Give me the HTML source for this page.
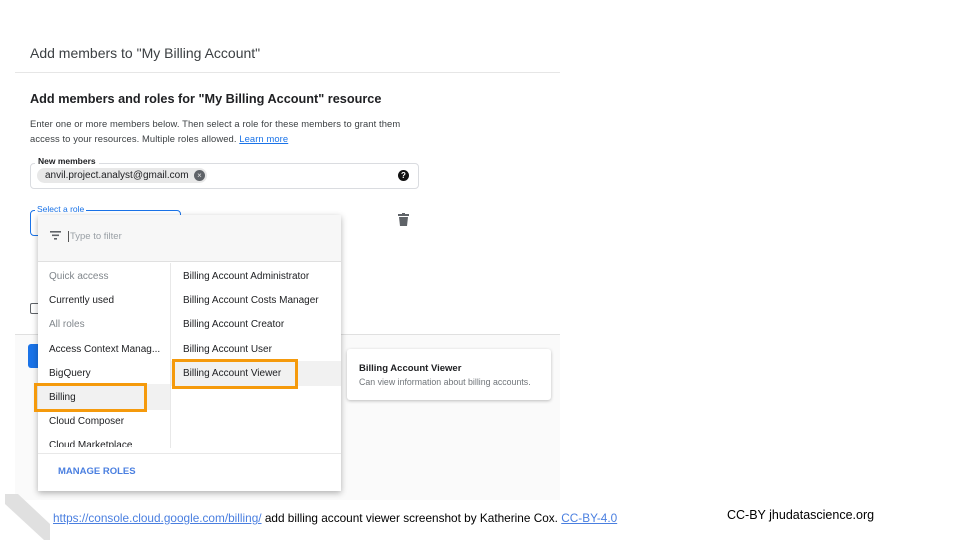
<!DOCTYPE html>
<html><head><style>
*{margin:0;padding:0;box-sizing:border-box}
body{width:960px;height:540px;background:#fff;position:relative;overflow:hidden;font-family:"Liberation Sans",sans-serif;color:#202124}
.a{position:absolute;white-space:nowrap}
.it{position:absolute;font-size:10px;color:#202124}
.g{color:#80868b}
</style></head><body>
<div class="a" style="left:15px;top:335px;width:545px;height:165px;background:#fafafa"></div>
<div class="a" style="left:30px;top:45px;font-size:14px;color:#3c4043">Add members to "My Billing Account"</div>
<div class="a" style="left:15px;top:72px;width:545px;height:1px;background:#e6e6e6"></div>
<div class="a" style="left:30px;top:92px;font-size:12.7px;font-weight:bold">Add members and roles for "My Billing Account" resource</div>
<div class="a" style="left:30px;top:116px;font-size:9.4px;line-height:15px;color:#3c4043;letter-spacing:0.1px">Enter one or more members below. Then select a role for these members to grant them<br>access to your resources. Multiple roles allowed. <span style="color:#1a73e8;text-decoration:underline">Learn more</span></div>
<div class="a" style="left:30px;top:163px;width:389px;height:26px;border:1px solid #dadce0;border-radius:4px"></div>
<div class="a" style="left:35px;top:156px;font-size:8.5px;font-weight:bold;background:#fff;padding:0 3px">New members</div>
<div class="a" style="left:37px;top:168px;height:15px;width:170px;border-radius:8px;background:#e8e8e8;font-size:10px;line-height:15px;padding-left:8px">anvil.project.analyst@gmail.com</div>
<div class="a" style="left:194px;top:170px;width:11px;height:11px;border-radius:50%;background:#5f6368;color:#e8e8e8;font-size:8px;line-height:11px;text-align:center">×</div>
<div class="a" style="left:398px;top:170px;width:11px;height:11px;border-radius:50%;background:#111;color:#fff;font-size:8px;font-weight:bold;line-height:11px;text-align:center">?</div>
<div class="a" style="left:30px;top:210px;width:151px;height:26px;border:1.5px solid #1a73e8;border-radius:4px"></div>
<div class="a" style="left:35px;top:204px;font-size:8.5px;color:#1a73e8;background:#fff;padding:0 2px">Select a role</div>
<svg class="a" style="left:398px;top:213px" width="11" height="13" viewBox="0 0 11 13"><rect x="0" y="1" width="11" height="2" fill="#5f6368"/><rect x="4" y="0" width="3" height="2" fill="#5f6368"/><path d="M1 4h9l-1 9H2z" fill="#5f6368"/></svg>
<div class="a" style="left:30px;top:303px;width:10px;height:11px;border:1.5px solid #5f6368;border-radius:2px"></div>
<div class="a" style="left:15px;top:334px;width:545px;height:1px;background:#e0e0e0"></div>
<div class="a" style="left:28px;top:344px;width:20px;height:24px;background:#1a73e8;border-radius:3px"></div>
<div class="a" style="left:38px;top:215px;width:303px;height:276px;background:#fff;box-shadow:0 2px 6px rgba(0,0,0,.3)"></div>
<div class="a" style="left:38px;top:215px;width:303px;height:47px;background:#f7f7f7;border-bottom:1px solid #e0e0e0"></div>
<svg class="a" style="left:50px;top:231px" width="11" height="9"><rect x="0" y="0" width="11" height="1.6" fill="#5f6368"/><rect x="2" y="3.5" width="7" height="1.6" fill="#5f6368"/><rect x="4" y="7" width="3" height="1.6" fill="#5f6368"/></svg>
<div class="a" style="left:68px;top:231px;font-size:9.5px;color:#9aa0a6;border-left:1px solid #555;padding-left:1px">Type to filter</div>
<div class="a" style="left:170px;top:263px;width:1px;height:185px;background:#e8e8e8"></div>
<div class="a" style="left:38px;top:384px;width:132px;height:26px;background:#f1f1f1"></div>
<div class="a" style="left:171px;top:361px;width:170px;height:25px;background:#f1f1f1"></div>
<div class="it g" style="left:49px;top:271px">Quick access</div>
<div class="it" style="left:49px;top:295px">Currently used</div>
<div class="it g" style="left:49px;top:319px">All roles</div>
<div class="it" style="left:49px;top:344px">Access Context Manag...</div>
<div class="it" style="left:49px;top:368px">BigQuery</div>
<div class="it" style="left:49px;top:392px">Billing</div>
<div class="it" style="left:49px;top:416px">Cloud Composer</div>
<div class="it" style="left:49px;top:440px;height:7px;overflow:hidden">Cloud Marketplace</div>
<div class="it" style="left:183px;top:271px">Billing Account Administrator</div>
<div class="it" style="left:183px;top:295px">Billing Account Costs Manager</div>
<div class="it" style="left:183px;top:319px">Billing Account Creator</div>
<div class="it" style="left:183px;top:344px">Billing Account User</div>
<div class="it" style="left:183px;top:368px">Billing Account Viewer</div>
<div class="a" style="left:38px;top:453px;width:303px;height:1px;background:#e8e8e8"></div>
<div class="a" style="left:58px;top:466px;font-size:9.5px;font-weight:bold;color:#4a7fe0">MANAGE ROLES</div>
<div class="a" style="left:34px;top:383px;width:113px;height:29px;border:3px solid #f59a0c"></div>
<div class="a" style="left:172px;top:359px;width:126px;height:30px;border:3px solid #f59a0c"></div>
<div class="a" style="left:347px;top:349px;width:204px;height:51px;background:#fff;border-radius:3px;box-shadow:0 1px 3px rgba(0,0,0,.25)"></div>
<div class="a" style="left:359px;top:363px;font-size:9.5px;font-weight:bold">Billing Account Viewer</div>
<div class="a" style="left:359px;top:377px;font-size:8.8px;color:#70757a">Can view information about billing accounts.</div>
<svg class="a" style="left:0;top:494px" width="50" height="46"><polygon points="5,0 18,0 50,30 50,46 44,46 5,10" fill="#e0e0e0"/></svg>
<div class="a" style="left:53px;top:511px;font-size:11.8px;color:#000"><span style="color:#4a7fe0;text-decoration:underline">https://console.cloud.google.com/billing/</span> add billing account viewer screenshot by Katherine Cox.  <span style="color:#4a7fe0;text-decoration:underline">CC-BY-4.0</span></div>
<div class="a" style="left:727px;top:508px;font-size:12.5px;color:#000">CC-BY  jhudatascience.org</div>
</body></html>
